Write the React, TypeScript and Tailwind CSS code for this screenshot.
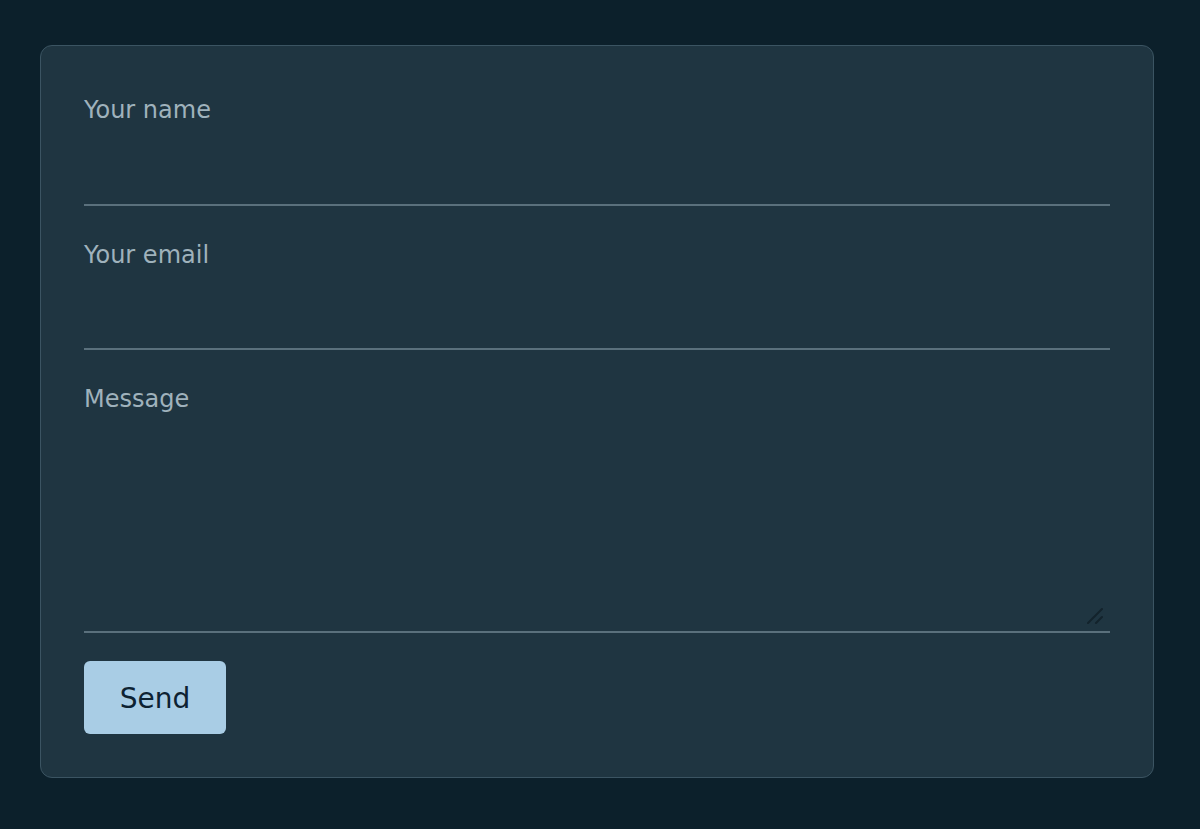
export default function App() {
	return (
		<div
			className="min-h-screen bg-[#0c202b] pl-10 pr-[46px] pt-[45px] pb-[51px]"
			style={{ fontFamily: '"DejaVu Sans", Verdana, sans-serif' }}
		>
			{/* contact form card */}
			<form
				className="flex flex-col gap-[28px] rounded-[12px] border border-[#3b5462] bg-[#1f3541] p-[43px]"
				onSubmit={(e) => e.preventDefault()}
			>
				<label className="flex flex-col">
					<span className="pt-[3px] text-[24px] leading-[36px] text-[#9fb2bc]">Your name</span>
					<input
						type="text"
						className="h-[78px] border-b-2 border-[#5a707c] bg-transparent text-[24px] text-[#dbe6ec] outline-none"
					/>
				</label>
				<label className="flex flex-col">
					<span className="pt-[3px] text-[24px] leading-[36px] text-[#9fb2bc]">Your email</span>
					<input
						type="email"
						className="h-[77px] border-b-2 border-[#5a707c] bg-transparent text-[24px] text-[#dbe6ec] outline-none"
					/>
				</label>
				<label className="flex flex-col">
					<span className="pt-[3px] text-[24px] leading-[36px] text-[#9fb2bc]">Message</span>
					<div className="relative">
						<textarea className="block h-[216px] w-full resize-none border-b-2 border-[#5a707c] bg-transparent text-[24px] text-[#dbe6ec] outline-none" />
						<svg
							className="pointer-events-none absolute bottom-[9px] right-[7px]"
							width="16"
							height="16"
							viewBox="0 0 16 16"
						>
							<path d="M1 15 L15 1 M9 15 L15 9" stroke="#13232c" strokeWidth="2" strokeLinecap="round" />
						</svg>
					</div>
				</label>
				<div>
					<button
						type="submit"
						className="h-[73px] w-[142px] rounded-[6px] bg-[#a9cde5] pt-[3px] text-[28px] text-[#0d2232]"
					>
						Send
					</button>
				</div>
			</form>
		</div>
	);
}
